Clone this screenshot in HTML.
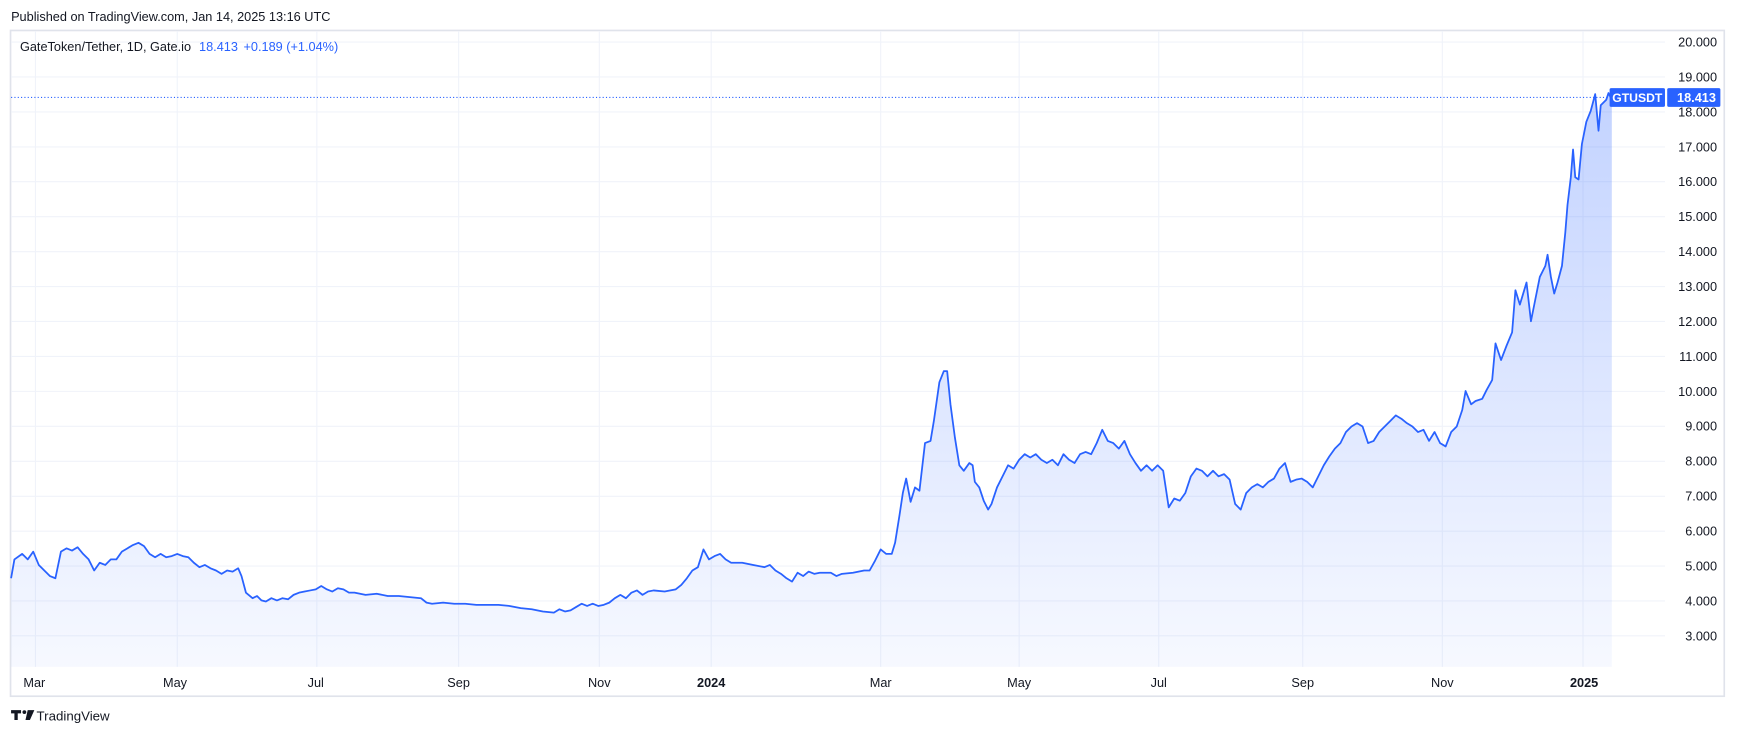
<!DOCTYPE html>
<html><head><meta charset="utf-8"><style>
html,body{margin:0;padding:0;background:#fff;width:1737px;height:737px;overflow:hidden}
svg{display:block;font-family:"Liberation Sans",sans-serif}
</style></head><body>
<svg width="1737" height="737" viewBox="0 0 1568 665.3" xmlns="http://www.w3.org/2000/svg">
<defs><linearGradient id="g" x1="0" y1="0" x2="0" y2="1"><stop offset="0" stop-color="#2962ff" stop-opacity="0.28"/><stop offset="1" stop-color="#2962ff" stop-opacity="0.04"/></linearGradient></defs>
<text x="10" y="19" font-size="11.5" fill="#131722">Published on TradingView.com, Jan 14, 2025 13:16 UTC</text>
<rect x="9.5" y="27.5" width="1547" height="601" fill="#fff" stroke="#e0e3eb" stroke-width="1.5"/>
<g stroke="#f0f3fa" stroke-width="1">
<line x1="10" x2="1503" y1="38" y2="38"/><line x1="10" x2="1503" y1="69.5" y2="69.5"/><line x1="10" x2="1503" y1="101" y2="101"/><line x1="10" x2="1503" y1="132.6" y2="132.6"/><line x1="10" x2="1503" y1="164" y2="164"/><line x1="10" x2="1503" y1="195.6" y2="195.6"/><line x1="10" x2="1503" y1="227.2" y2="227.2"/><line x1="10" x2="1503" y1="258.7" y2="258.7"/><line x1="10" x2="1503" y1="290.2" y2="290.2"/><line x1="10" x2="1503" y1="321.8" y2="321.8"/><line x1="10" x2="1503" y1="353.3" y2="353.3"/><line x1="10" x2="1503" y1="384.8" y2="384.8"/><line x1="10" x2="1503" y1="416.4" y2="416.4"/><line x1="10" x2="1503" y1="448" y2="448"/><line x1="10" x2="1503" y1="479.5" y2="479.5"/><line x1="10" x2="1503" y1="511" y2="511"/><line x1="10" x2="1503" y1="542.5" y2="542.5"/><line x1="10" x2="1503" y1="574" y2="574"/>
<line x1="32" x2="32" y1="28" y2="602"/><line x1="160" x2="160" y1="28" y2="602"/><line x1="286" x2="286" y1="28" y2="602"/><line x1="414" x2="414" y1="28" y2="602"/><line x1="541" x2="541" y1="28" y2="602"/><line x1="642" x2="642" y1="28" y2="602"/><line x1="795" x2="795" y1="28" y2="602"/><line x1="920" x2="920" y1="28" y2="602"/><line x1="1046" x2="1046" y1="28" y2="602"/><line x1="1176" x2="1176" y1="28" y2="602"/><line x1="1302" x2="1302" y1="28" y2="602"/><line x1="1429" x2="1429" y1="28" y2="602"/>
</g>
<g font-size="11.5" fill="#131722" text-anchor="end">
<text x="1550" y="42">20.000</text><text x="1550" y="73.5">19.000</text><text x="1550" y="136.6">17.000</text><text x="1550" y="168">16.000</text><text x="1550" y="199.6">15.000</text><text x="1550" y="231.2">14.000</text><text x="1550" y="262.7">13.000</text><text x="1550" y="294.2">12.000</text><text x="1550" y="325.8">11.000</text><text x="1550" y="357.3">10.000</text><text x="1550" y="388.8">9.000</text><text x="1550" y="420.4">8.000</text><text x="1550" y="452">7.000</text><text x="1550" y="483.5">6.000</text><text x="1550" y="515">5.000</text><text x="1550" y="546.5">4.000</text><text x="1550" y="578">3.000</text>
</g>
<g font-size="11.5" fill="#131722" text-anchor="middle">
<text x="31" y="620">Mar</text><text x="158" y="620">May</text><text x="285" y="620">Jul</text><text x="414" y="620">Sep</text><text x="541" y="620">Nov</text><text x="642" y="620" font-weight="bold">2024</text><text x="795" y="620">Mar</text><text x="920" y="620">May</text><text x="1046" y="620">Jul</text><text x="1176" y="620">Sep</text><text x="1302" y="620">Nov</text><text x="1430" y="620" font-weight="bold">2025</text>
</g>
<line x1="10" x2="1455" y1="88" y2="88" stroke="#2962ff" stroke-width="1" stroke-dasharray="1,2"/>
<polygon fill="url(#g)" points="10,602 10,522 13,505 20,500 25,505 30,498 35,510 40,515 45,520 50,522 55,498 60,495 65,497 70,494 75,500 80,505 85,515 90,508 95,510 100,505 105,505 110,498 115,495 120,492 125,490 130,493 135,500 140,503 145,500 150,503 155,502 160,500 165,502 170,503 175,508 180,512 185,510 190,513 195,515 200,518 205,515 210,516 215,513 218,520 222,535 228,540 232,538 236,542 240,543 245,540 250,542 255,540 260,541 265,537 270,535 275,534 280,533 285,532 290,529 295,532 300,534 305,531 310,532 315,535 320,535 330,537 340,536 350,538 360,538 370,539 380,540 385,544 390,545 400,544 410,545 420,545 430,546 440,546 450,546 460,547 470,549 480,550 490,552 500,553 505,550 510,552 515,551 520,548 525,545 530,547 535,545 540,547 545,546 550,544 555,540 560,537 565,540 570,535 575,533 580,537 585,534 590,533 600,534 610,532 615,528 620,522 625,515 630,512 635,496 640,505 645,502 650,500 655,505 660,508 670,508 680,510 690,512 695,510 700,515 705,518 710,522 715,525 720,517 725,520 730,516 735,518 740,517 750,517 755,520 760,518 770,517 780,515 785,515 790,506 795,496 800,500 805,500 808,490 812,465 815,445 818,432 822,453 826,440 830,443 835,400 840,398 843,380 848,345 852,335 855,335 858,365 862,395 866,420 870,425 875,418 878,420 880,435 884,440 888,452 892,460 895,455 900,440 905,430 910,420 915,423 920,415 925,410 930,413 935,410 940,415 945,418 950,415 955,420 960,410 965,415 970,418 975,410 980,408 985,410 990,400 995,388 1000,398 1005,400 1010,405 1015,398 1020,410 1025,418 1030,425 1035,420 1040,425 1045,420 1050,425 1055,458 1060,450 1065,452 1070,445 1075,430 1080,423 1085,425 1090,430 1095,425 1100,430 1105,428 1110,433 1115,455 1120,460 1125,445 1130,440 1135,437 1140,440 1145,435 1150,432 1155,423 1160,418 1165,435 1170,433 1175,432 1180,435 1185,440 1190,430 1195,420 1200,412 1205,405 1210,400 1215,390 1220,385 1225,382 1230,385 1235,400 1240,398 1245,390 1250,385 1255,380 1260,375 1265,378 1270,382 1275,385 1280,390 1285,388 1290,398 1295,390 1300,400 1305,403 1310,390 1315,385 1320,370 1323,353 1328,365 1332,362 1338,360 1342,352 1347,343 1350,310 1355,325 1360,312 1365,300 1368,262 1372,275 1375,265 1378,255 1382,290 1385,275 1390,250 1395,240 1397,230 1400,250 1403,265 1406,255 1410,240 1413,210 1415,185 1418,160 1420,135 1422,160 1425,162 1428,130 1432,110 1436,100 1440,85 1443,118 1445,95 1450,90 1452,84 1455,90 1455,602"/>
<polyline fill="none" stroke="#2962ff" stroke-width="1.6" stroke-linejoin="round" points="10,522 13,505 20,500 25,505 30,498 35,510 40,515 45,520 50,522 55,498 60,495 65,497 70,494 75,500 80,505 85,515 90,508 95,510 100,505 105,505 110,498 115,495 120,492 125,490 130,493 135,500 140,503 145,500 150,503 155,502 160,500 165,502 170,503 175,508 180,512 185,510 190,513 195,515 200,518 205,515 210,516 215,513 218,520 222,535 228,540 232,538 236,542 240,543 245,540 250,542 255,540 260,541 265,537 270,535 275,534 280,533 285,532 290,529 295,532 300,534 305,531 310,532 315,535 320,535 330,537 340,536 350,538 360,538 370,539 380,540 385,544 390,545 400,544 410,545 420,545 430,546 440,546 450,546 460,547 470,549 480,550 490,552 500,553 505,550 510,552 515,551 520,548 525,545 530,547 535,545 540,547 545,546 550,544 555,540 560,537 565,540 570,535 575,533 580,537 585,534 590,533 600,534 610,532 615,528 620,522 625,515 630,512 635,496 640,505 645,502 650,500 655,505 660,508 670,508 680,510 690,512 695,510 700,515 705,518 710,522 715,525 720,517 725,520 730,516 735,518 740,517 750,517 755,520 760,518 770,517 780,515 785,515 790,506 795,496 800,500 805,500 808,490 812,465 815,445 818,432 822,453 826,440 830,443 835,400 840,398 843,380 848,345 852,335 855,335 858,365 862,395 866,420 870,425 875,418 878,420 880,435 884,440 888,452 892,460 895,455 900,440 905,430 910,420 915,423 920,415 925,410 930,413 935,410 940,415 945,418 950,415 955,420 960,410 965,415 970,418 975,410 980,408 985,410 990,400 995,388 1000,398 1005,400 1010,405 1015,398 1020,410 1025,418 1030,425 1035,420 1040,425 1045,420 1050,425 1055,458 1060,450 1065,452 1070,445 1075,430 1080,423 1085,425 1090,430 1095,425 1100,430 1105,428 1110,433 1115,455 1120,460 1125,445 1130,440 1135,437 1140,440 1145,435 1150,432 1155,423 1160,418 1165,435 1170,433 1175,432 1180,435 1185,440 1190,430 1195,420 1200,412 1205,405 1210,400 1215,390 1220,385 1225,382 1230,385 1235,400 1240,398 1245,390 1250,385 1255,380 1260,375 1265,378 1270,382 1275,385 1280,390 1285,388 1290,398 1295,390 1300,400 1305,403 1310,390 1315,385 1320,370 1323,353 1328,365 1332,362 1338,360 1342,352 1347,343 1350,310 1355,325 1360,312 1365,300 1368,262 1372,275 1375,265 1378,255 1382,290 1385,275 1390,250 1395,240 1397,230 1400,250 1403,265 1406,255 1410,240 1413,210 1415,185 1418,160 1420,135 1422,160 1425,162 1428,130 1432,110 1436,100 1440,85 1443,118 1445,95 1450,90 1452,84 1455,90"/>
<text x="18" y="46" font-size="11.5" fill="#131722">GateToken/Tether, 1D, Gate.io <tspan fill="#2962ff" dx="4">18.413</tspan><tspan fill="#2962ff" dx="5">+0.189 (+1.04%)</tspan></text>
<rect x="1453" y="79.5" width="50" height="17" rx="1.5" fill="#2962ff"/>
<text x="1478" y="92" font-size="11" fill="#fff" text-anchor="middle" font-weight="bold">GTUSDT</text>
<rect x="1505" y="79.5" width="48" height="17" rx="1.5" fill="#2962ff"/>
<text x="1549" y="92" font-size="11.5" fill="#fff" text-anchor="end" font-weight="bold">18.413</text>
<text x="1550" y="105" font-size="11.5" fill="#131722" text-anchor="end">18.000</text>
<g fill="#131722"><path d="M10,641 h9 v3 h-3 v6 h-3 v-6 h-3z"/><circle cx="22" cy="642.8" r="1.7"/><path d="M25,641 h6 l-4,9 h-4z"/></g>
<text x="33" y="650.5" font-size="12" fill="#131722">TradingView</text>
</svg>
</body></html>
